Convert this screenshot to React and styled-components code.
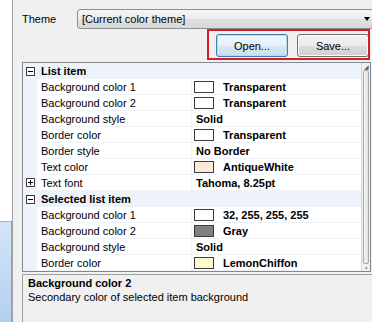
import styled, { createGlobalStyle } from "styled-components";

const LINE = "#eef2f9";

const GlobalStyle = createGlobalStyle`
  html, body {
    margin: 0;
    padding: 0;
    background: #f0f0f0;
    overflow: hidden;
  }
  #root {
    width: 372px;
    height: 322px;
  }
`;

const Frame = styled.div`
  display: flex;
  width: 372px;
  height: 322px;
  overflow: hidden;
  font-family: "Liberation Sans", Arial, sans-serif;
  font-size: 11px;
  color: #000;
  background: #f0f0f0;
`;

const SidePanel = styled.div`
  width: 12px;
  flex-shrink: 0;
  background: #fff;
  border-right: 1px solid #a0a0a0;
  display: flex;
  flex-direction: column;
  justify-content: flex-end;
`;

const SideSelection = styled.div`
  height: 100px;
  background: linear-gradient(to bottom, #d3e5f9, #b4cfef);
  border-top: 1px solid #8fb2dc;
  border-right: 1px solid #84a8d4;
`;

const Main = styled.div`
  flex: 1;
  min-width: 0;
  display: flex;
  flex-direction: column;
  padding: 9px 0 0 9px;
`;

const ThemeRow = styled.div`
  display: flex;
  align-items: center;
  height: 20px;
`;

const Label = styled.span`
  width: 55px;
  flex-shrink: 0;
`;

const Combo = styled.div`
  width: 302px;
  flex-shrink: 0;
  height: 20px;
  box-sizing: border-box;
  display: flex;
  align-items: center;
  padding-left: 4px;
  border: 1px solid #8e8f8f;
  border-radius: 3px;
  background: linear-gradient(to bottom, #f4f4f4 0%, #ececec 50%, #e0e0e0 51%, #d8d8d8 100%);
`;

const ComboArrow = styled.span`
  margin-left: auto;
  margin-right: 8px;
  width: 0;
  height: 0;
  border-left: 3.5px solid transparent;
  border-right: 3.5px solid transparent;
  border-top: 4px solid #000;
`;

const ActionArea = styled.div`
  position: relative;
  display: flex;
  justify-content: flex-end;
  gap: 9px;
  margin-top: 5px;
  padding-right: 3px;
`;

const Button = styled.button`
  all: unset;
  width: 72px;
  height: 23px;
  box-sizing: border-box;
  display: flex;
  align-items: center;
  justify-content: center;
  font-family: inherit;
  font-size: 11px;
  color: #000;
  border: 1px solid ${({ focused }) => (focused ? "#3c7fb1" : "#707070")};
  border-radius: 3px;
  background: ${({ focused }) =>
    focused
      ? "linear-gradient(to bottom, #f0f7fc 0%, #e6f0f8 50%, #d7e6f2 51%, #cddfee 100%)"
      : "linear-gradient(to bottom, #f2f2f2 0%, #ebebeb 50%, #dddddd 51%, #cfcfcf 100%)"};
  box-shadow: ${({ focused }) =>
    focused ? "inset 0 0 0 1px #b6dcf2" : "inset 0 0 0 1px #fafafa"};
`;

const Highlight = styled.div`
  position: absolute;
  top: -5px;
  right: 2px;
  width: 163px;
  height: 31px;
  box-sizing: border-box;
  border: 2px solid #d31f2b;
  pointer-events: none;
`;

const Grid = styled.div`
  display: flex;
  margin-top: 5px;
  margin-right: 1px;
  border: 1px solid #828790;
  background: #fff;
`;

const GridBody = styled.div`
  flex: 1;
  display: flex;
  flex-direction: column;
`;

const Row = styled.div`
  display: grid;
  grid-template-columns: 14px 155px 1fr;
  height: 16px;
  box-sizing: border-box;
  border-bottom: 1px solid ${LINE};
`;

const Margin = styled.div`
  background: ${LINE};
  display: flex;
  align-items: center;
  padding-left: 3px;
`;

const NameCell = styled.div`
  display: flex;
  align-items: center;
  padding-left: 4px;
  border-right: 1px solid ${LINE};
  white-space: nowrap;
`;

const ValueCell = styled.div`
  display: flex;
  align-items: center;
  padding-left: ${({ swatch }) => (swatch ? "2px" : "4px")};
  font-weight: bold;
  white-space: nowrap;
  overflow: hidden;
`;

const Swatch = styled.span`
  width: 20px;
  height: 12px;
  box-sizing: border-box;
  border: 1px solid #3a3a3a;
  background: ${({ color }) => color};
  margin-right: 9px;
  flex-shrink: 0;
`;

const CategoryRow = styled.div`
  display: flex;
  align-items: center;
  height: 16px;
  box-sizing: border-box;
  background: ${LINE};
  font-weight: bold;
  padding-left: 3px;
`;

const Toggle = styled.span`
  position: relative;
  width: 9px;
  height: 9px;
  box-sizing: border-box;
  border: 1px solid #3c3c3c;
  background: #fff;
  flex-shrink: 0;
  margin-right: ${({ gap }) => gap || 0}px;

  &::before {
    content: "";
    position: absolute;
    left: 1px;
    top: 3px;
    width: 5px;
    height: 1px;
    background: #000;
  }

  &::after {
    content: "";
    display: ${({ open }) => (open ? "none" : "block")};
    position: absolute;
    left: 3px;
    top: 1px;
    width: 1px;
    height: 5px;
    background: #000;
  }
`;

const ScrollBar = styled.div`
  width: 8px;
  flex-shrink: 0;
  display: flex;
  flex-direction: column;
  background: #f0f0f0;
  border-left: 1px solid #d6d6d6;
`;

const ScrollCap = styled.div`
  height: 7px;
  display: flex;
  align-items: center;
  justify-content: center;
  font-size: 6px;
  color: #606060;
`;

const ScrollThumb = styled.div`
  flex: 1;
  margin: 0 1px;
  border: 1px solid #a8a8a8;
  border-radius: 2px;
  background: linear-gradient(to right, #f4f4f4, #e2e2e2);
`;

const Description = styled.div`
  flex: 1;
  margin-top: 2px;
  border: 1px solid #a0a0a0;
  border-right: none;
  border-bottom: none;
  padding: 1px 5px;
  line-height: 14px;
`;

const DescTitle = styled.div`
  font-weight: bold;
`;

const sections = [
  {
    title: "List item",
    items: [
      { name: "Background color 1", value: "Transparent", color: "#ffffff" },
      { name: "Background color 2", value: "Transparent", color: "#ffffff" },
      { name: "Background style", value: "Solid" },
      { name: "Border color", value: "Transparent", color: "#ffffff" },
      { name: "Border style", value: "No Border" },
      { name: "Text color", value: "AntiqueWhite", color: "#faebd7" },
      { name: "Text font", value: "Tahoma, 8.25pt", expandable: true },
    ],
  },
  {
    title: "Selected list item",
    items: [
      { name: "Background color 1", value: "32, 255, 255, 255", color: "#ffffff" },
      { name: "Background color 2", value: "Gray", color: "#808080" },
      { name: "Background style", value: "Solid" },
      { name: "Border color", value: "LemonChiffon", color: "#fffacd" },
    ],
  },
];

function App() {
  return (
    <>
      <GlobalStyle />
      <Frame>
        <SidePanel>
          <SideSelection />
        </SidePanel>
        <Main>
          <ThemeRow>
            <Label>Theme</Label>
            <Combo>
              [Current color theme]
              <ComboArrow />
            </Combo>
          </ThemeRow>
          <ActionArea>
            <Button focused>Open...</Button>
            <Button>Save...</Button>
            <Highlight />
          </ActionArea>
          <Grid>
            <GridBody>
              {sections.map((section) => (
                <div key={section.title}>
                  <CategoryRow>
                    <Toggle open gap={6} />
                    {section.title}
                  </CategoryRow>
                  {section.items.map((item) => (
                    <Row key={item.name}>
                      <Margin>{item.expandable && <Toggle />}</Margin>
                      <NameCell>{item.name}</NameCell>
                      <ValueCell swatch={!!item.color}>
                        {item.color && <Swatch color={item.color} />}
                        {item.value}
                      </ValueCell>
                    </Row>
                  ))}
                </div>
              ))}
            </GridBody>
            <ScrollBar>
              <ScrollCap>◢</ScrollCap>
              <ScrollThumb />
              <ScrollCap>▪</ScrollCap>
            </ScrollBar>
          </Grid>
          <Description>
            <DescTitle>Background color 2</DescTitle>
            Secondary color of selected item background
          </Description>
        </Main>
      </Frame>
    </>
  );
}

export default App;
